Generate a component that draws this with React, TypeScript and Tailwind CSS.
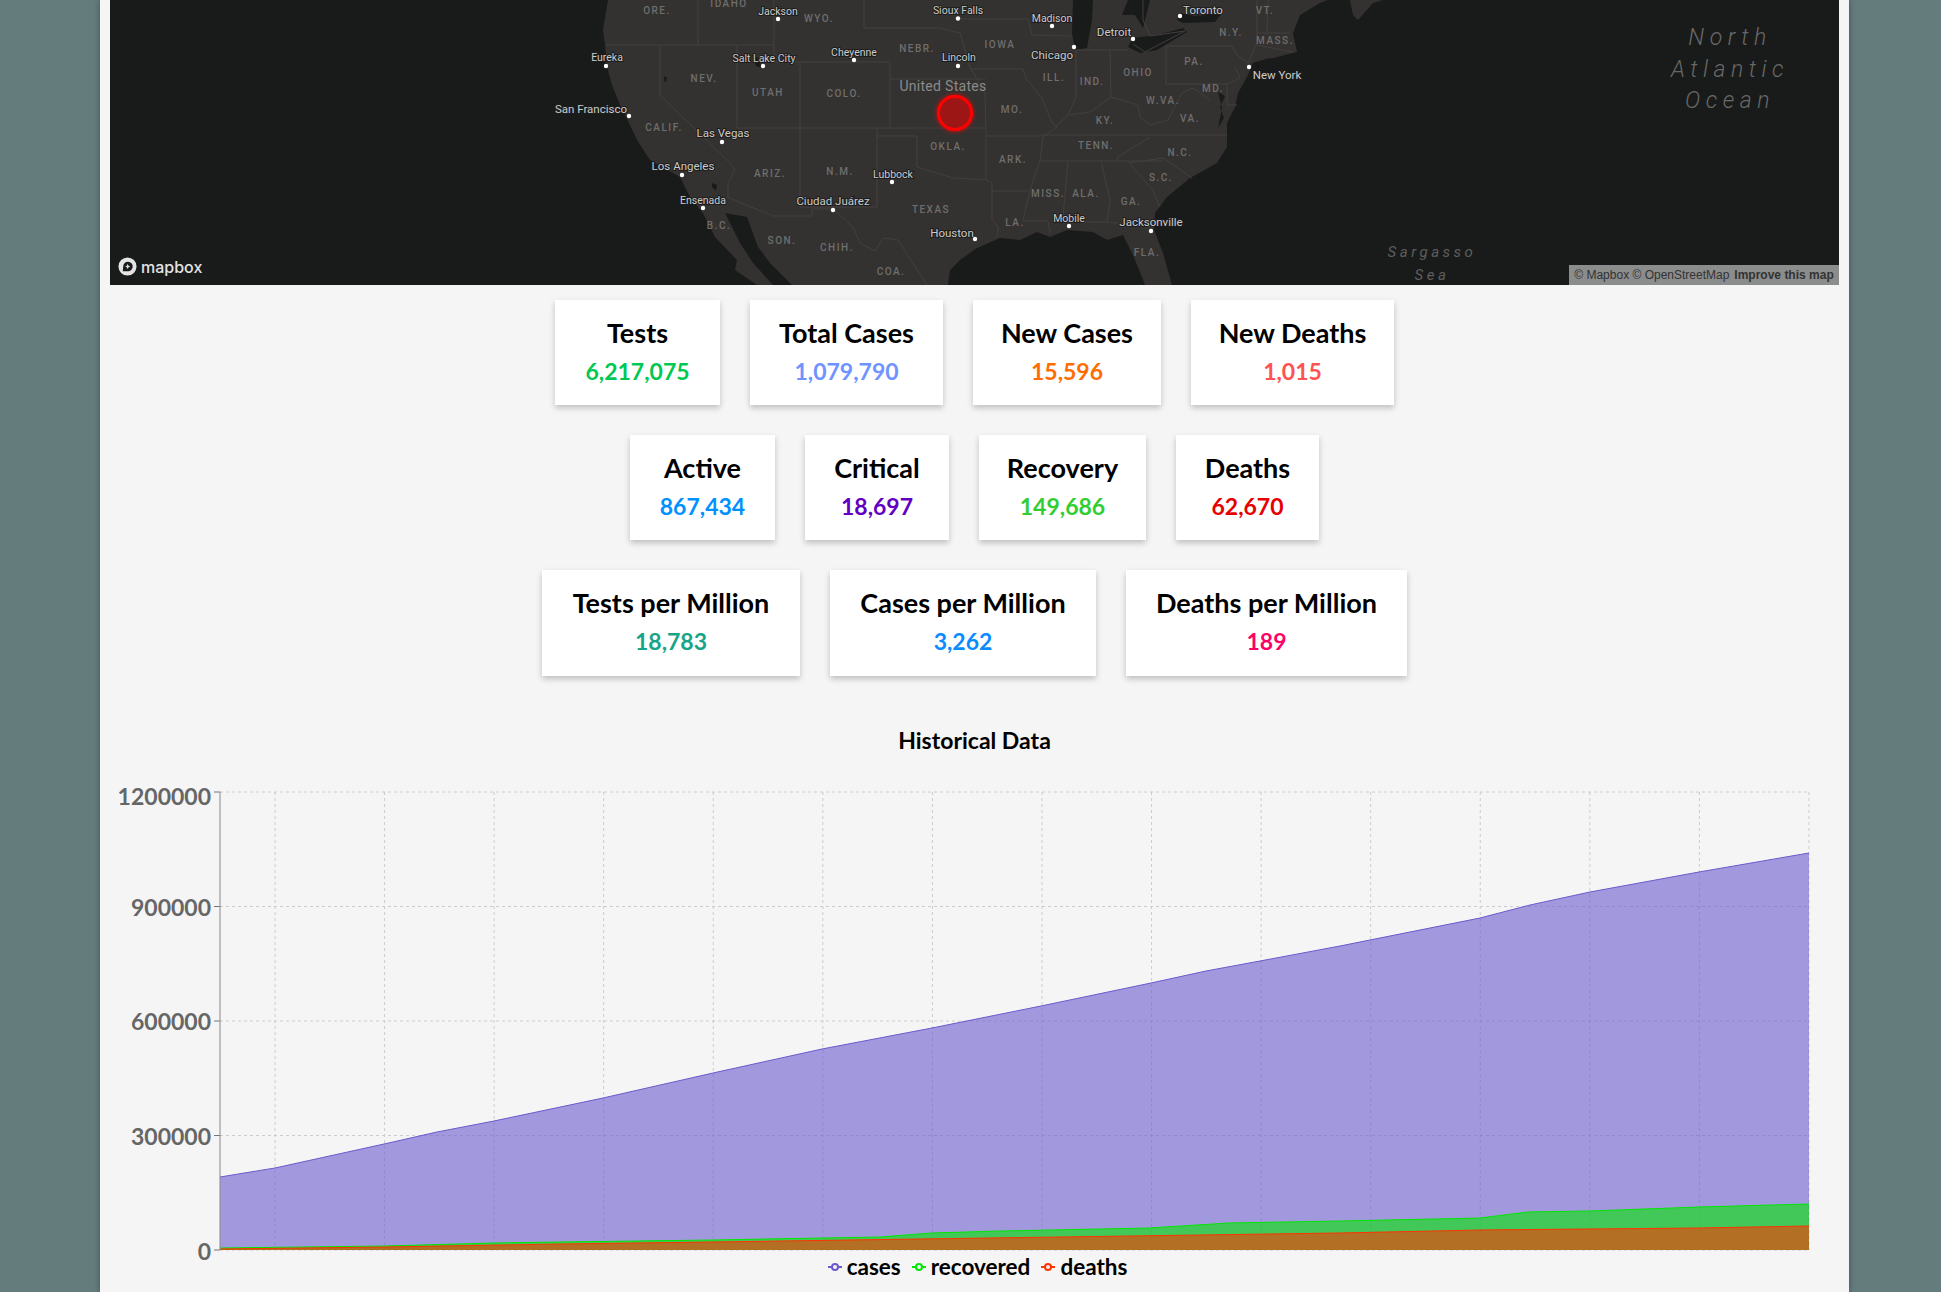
import React from 'react';

type Stat = { label: string; value: string; width: string; color: string };

const rowOne: Stat[] = [
  { label: 'Tests', value: '6,217,075', width: 'w-[165px]', color: 'text-[#00c853]' },
  { label: 'Total Cases', value: '1,079,790', width: 'w-[193px]', color: 'text-[#6f94ff]' },
  { label: 'New Cases', value: '15,596', width: 'w-[188px]', color: 'text-[#ff6d00]' },
  { label: 'New Deaths', value: '1,015', width: 'w-[203px]', color: 'text-[#ff5252]' },
];
const rowTwo: Stat[] = [
  { label: 'Active', value: '867,434', width: 'w-[145px]', color: 'text-[#0091ff]' },
  { label: 'Critical', value: '18,697', width: 'w-[144px]', color: 'text-[#6200c4]' },
  { label: 'Recovery', value: '149,686', width: 'w-[167px]', color: 'text-[#32cd32]' },
  { label: 'Deaths', value: '62,670', width: 'w-[143px]', color: 'text-[#e60000]' },
];
const rowThree: Stat[] = [
  { label: 'Tests per Million', value: '18,783', width: 'w-[258px]', color: 'text-[#17a589]' },
  { label: 'Cases per Million', value: '3,262', width: 'w-[266px]', color: 'text-[#0a8cff]' },
  { label: 'Deaths per Million', value: '189', width: 'w-[281px]', color: 'text-[#ff0066]' },
];

const cities: [string, number, number, number, number, boolean][] = [
  ['Jackson', 778, 15, 778, 19, true],
  ['Sioux Falls', 958, 14, 958, 18.5, true],
  ['Eureka', 607, 61, 606, 66, true],
  ['Salt Lake City', 764, 62, 763, 66, true],
  ['Cheyenne', 854, 56, 854, 60, true],
  ['Lincoln', 959, 61, 958, 66, true],
  ['San Francisco', 591, 113, 629, 116, false],
  ['Las Vegas', 723, 137, 722, 142, false],
  ['Los Angeles', 683, 170, 682, 175, false],
  ['Ensenada', 703, 204, 703, 208, true],
  ['Ciudad Juárez', 833, 205, 833, 210, false],
  ['Lubbock', 893, 178, 892, 182, true],
  ['Houston', 952, 237, 975, 239, false],
  ['Madison', 1052, 22, 1052, 26, true],
  ['Toronto', 1203, 14, 1180, 16, false],
  ['Detroit', 1114, 36, 1133, 39, false],
  ['Chicago', 1052, 59, 1074, 47, false],
  ['New York', 1277, 79, 1249, 67, false],
  ['Mobile', 1069, 222, 1069, 226, true],
  ['Jacksonville', 1151, 226, 1151, 231, false],
];

const states: [string, number, number][] = [
  ['ORE.', 657, 14], ['IDAHO', 729, 7], ['WYO.', 819, 22], ['NEBR.', 917, 52], ['IOWA', 1000, 48],
  ['NEV.', 704, 82], ['UTAH', 768, 96], ['COLO.', 844, 97], ['CALIF.', 664, 131], ['MO.', 1012, 113],
  ['OKLA.', 948, 150], ['ARIZ.', 770, 177], ['N.M.', 840, 175], ['TEXAS', 931, 213], ['ARK.', 1013, 163],
  ['LA.', 1015, 226], ['SON.', 782, 244], ['CHIH.', 837, 251], ['COA.', 891, 275], ['B.C.', 719, 229],
  ['N.Y.', 1231, 36], ['VT.', 1265, 14], ['MASS.', 1275, 44], ['PA.', 1194, 65], ['OHIO', 1138, 76],
  ['ILL.', 1054, 81], ['IND.', 1092, 85], ['MD.', 1213, 92], ['W.VA.', 1163, 104], ['VA.', 1190, 122],
  ['KY.', 1105, 124], ['TENN.', 1096, 149], ['N.C.', 1180, 156], ['S.C.', 1161, 181], ['MISS.', 1048, 197],
  ['ALA.', 1086, 197], ['GA.', 1131, 205], ['FLA.', 1147, 256],
];

const land =
  '608,0 603,30 605,45 607,67 612,85 620,105 630,125 637,140 650,160 680,177 690,197 703,213 715,237 737,260 735,270 757,285 948,285 950,270 960,260 977,248 1000,238 1020,240 1037,232 1050,237 1067,230 1093,232 1107,240 1123,235 1132,253 1138,267 1145,285 1172,285 1163,253 1154,230 1155,213 1167,197 1190,178 1217,163 1227,147 1227,123 1235,107 1238,93 1248,75 1253,63 1297,52 1293,33 1300,15 1320,3 1328,0';

const waters = [
  '725,213 747,217 758,247 770,263 792,285 773,285 753,263 740,243',
  '1073,0 1072,33 1075,50 1087,48 1092,20 1093,0',
  '1128,0 1122,15 1135,15 1143,28 1150,0',
  '1128,47 1140,53 1157,50 1187,32 1183,28 1157,35 1133,38',
  '1177,20 1180,13 1195,16 1222,13 1215,22 1183,23',
  '1253,63 1290,52 1270,58 1256,67',
  '1218,92 1225,96 1220,107 1224,118 1218,128 1222,108',
  '752,55 758,58 762,68 756,66',
  '664,76 667,78 666,82 664,81',
  '712,183 717,185 716,191 712,187',
];

const borders = [
  '606,45 774,45', '660,45 660,95 730,163 735,170 728,183 728,197', '698,0 698,45', '774,0 774,62 800,62',
  '737,45 737,128 986,128', '800,62 800,207', '864,0 864,28 940,28 960,33 970,67 985,93 986,136 986,180',
  '800,62 890,62 890,128', '890,79 985,79', '877,128 877,207 800,207',
  '877,136 917,136 917,167 953,178 987,180 992,183 992,220 998,227 997,237', '986,136 1040,136', '992,191 1028,191',
  '727,197 773,216 812,216 812,209 833,209 853,227 860,243 875,251 883,238 898,240 913,263 927,285',
  '960,19 1028,19 1032,35 1072,36', '970,69 1023,69 1027,80 1042,98 1052,123 1057,127 1043,137 1040,161 1030,190 1023,220',
  '1076,50 1076,97 1068,115 1055,127', '1075,50 1128,50', '1110,50 1111,97',
  '1068,115 1090,112 1111,97 1138,105 1140,117 1150,125 1168,120 1182,93 1193,88 1210,100',
  '1166,46 1166,84 1228,84', '1166,46 1232,46 1237,55 1248,63', '1235,67 1240,78 1228,84', '1227,84 1227,105 1237,105',
  '1040,135 1227,135', '1040,161 1163,161', '1150,137 1118,157 1117,161', '1129,163 1163,158 1192,178',
  '1129,163 1153,190 1160,207', '1068,161 1063,217', '1101,161 1110,200 1107,222', '1023,221 1048,221 1050,233',
  '1068,222 1108,222 1150,227', '1257,0 1257,43 1248,63', '1268,0 1267,32', '1257,33 1290,33', '1257,45 1293,52',
  '1133,44 1145,52 1185,31 1150,36 1143,20 1143,0',
];

const casesLine: [number, number][] = [
  [220, 1177], [275, 1168], [384, 1144], [437, 1132], [494, 1121], [603, 1098], [713, 1073], [822, 1049],
  [932, 1028], [1041, 1006], [1151, 983], [1206, 971], [1260, 961], [1340, 946], [1370, 940], [1480, 918],
  [1530, 905], [1590, 892], [1699, 872], [1809, 853],
];
const recoveredLine: [number, number][] = [
  [220, 1248], [384, 1246], [494, 1243], [560, 1242], [713, 1240], [822, 1238], [880, 1237], [932, 1233],
  [1000, 1231], [1149, 1228], [1229, 1223], [1340, 1221], [1480, 1218], [1528, 1212], [1590, 1211], [1699, 1207],
  [1809, 1204],
];
const deathsLine: [number, number][] = [
  [220, 1249], [384, 1247], [560, 1244], [713, 1242], [1060, 1237], [1340, 1233], [1480, 1230], [1699, 1228],
  [1809, 1226],
];

const yTicks: [string, number, number][] = [
  ['1200000', 792, 805],
  ['900000', 906.5, 915.5],
  ['600000', 1021, 1030],
  ['300000', 1135.5, 1144.5],
  ['0', 1250, 1259.5],
];
const xGrid = Array.from({ length: 15 }, (_, i) => 275 + i * 109.57);

const toPoints = (line: [number, number][]) => line.map(([x, y]) => `${x},${y}`).join(' ');
const toArea = (line: [number, number][]) => `220,1250 ${toPoints(line)} 1809,1250`;

function MapPanel() {
  return (
    <div className="relative h-[285px] overflow-hidden bg-[#191b1a]">
      <svg viewBox="110 0 1729 285" className="block h-[285px] w-[1729px]">
        <polygon points={land} className="fill-[#343231]" />
        <polygon points="1350,0 1353,15 1358,20 1373,3 1383,0" className="fill-[#343231]" />
        {waters.map((p) => (
          <polygon key={p} points={p} className="fill-[#191b1a]" />
        ))}
        {borders.map((p) => (
          <polyline key={p} points={p} className="fill-none stroke-[#423f3e] stroke-[1px]" />
        ))}
        {states.map(([name, x, y]) => (
          <text
            key={name}
            x={x}
            y={y}
            textAnchor="middle"
            className="fill-[#6f6e6d] font-['Roboto',sans-serif] text-[10px] font-medium tracking-[1.5px]"
          >
            {name}
          </text>
        ))}
        <text x={943} y={91} textAnchor="middle" className="fill-[#8b8a89] font-['Roboto',sans-serif] text-[14px] tracking-[0.3px]">
          United States
        </text>
        {cities.map(([name, tx, ty, dx, dy, small]) => (
          <g key={name}>
            <text
              x={tx}
              y={ty}
              textAnchor="middle"
              className={`fill-[#cbcbcb] stroke-[#1d1d1d] stroke-[2px] font-['Roboto',sans-serif] [paint-order:stroke] ${small ? 'text-[10.5px]' : 'text-[11.5px]'}`}
            >
              {name}
            </text>
            <circle cx={dx} cy={dy} r={2.2} className="fill-white" />
          </g>
        ))}
        <circle cx={955} cy={113} r={16.5} className="fill-[#9c1616] stroke-[#ff0000] stroke-[3px] drop-shadow-[0_0_2px_#ff0000]" />
        {[['North', 45], ['Atlantic', 77], ['Ocean', 108]].map(([t, y]) => (
          <text
            key={t}
            x={1730}
            y={y}
            textAnchor="middle"
            className="fill-[#686868] font-['Roboto',sans-serif] text-[23px] font-light italic tracking-[5.5px]"
          >
            {t}
          </text>
        ))}
        {[['Sargasso', 257], ['Sea', 280]].map(([t, y]) => (
          <text
            key={t}
            x={1432}
            y={y}
            textAnchor="middle"
            className="fill-[#5e5e5e] font-['Roboto',sans-serif] text-[15px] italic tracking-[3.5px]"
          >
            {t}
          </text>
        ))}
      </svg>
      <div className="absolute bottom-[9px] left-[8px] flex items-center gap-[4px]">
        <svg viewBox="0 0 20 20" className="h-[19px] w-[19px]">
          <circle cx="10" cy="10" r="9.5" fill="#e4e4e4" />
          <path d="M5 15 L5.5 10 A5 5 0 1 1 10 15 Z" fill="#191b1a" />
          <path d="M10.2 7 L11 9.2 L13 10 L11 10.8 L10.2 13 L9.4 10.8 L7.4 10 L9.4 9.2 Z" fill="#e4e4e4" />
        </svg>
        <span className="font-['Inter',sans-serif] text-[16px] leading-none font-medium text-[#e4e4e4]">mapbox</span>
      </div>
      <div className="absolute right-0 bottom-0 flex h-[20px] w-[270px] items-center justify-center gap-[5px] bg-[#8b8c8c] font-['Liberation_Sans',sans-serif] text-[12px] text-[#333]">
        <span>© Mapbox © OpenStreetMap</span>
        <span className="font-bold">Improve this map</span>
      </div>
    </div>
  );
}

function StatRow({ stats, tall }: { stats: Stat[]; tall?: boolean }) {
  return (
    <div className="flex justify-center gap-[30px]">
      {stats.map((s) => (
        <div
          key={s.label}
          className={`${s.width} ${tall ? 'h-[106px]' : 'h-[105px]'} flex flex-col items-center bg-white pt-[16px] shadow-[0_3px_6px_rgba(0,0,0,0.22)]`}
        >
          <div className="text-[27px] leading-[34px] font-bold whitespace-nowrap text-black">{s.label}</div>
          <div className={`${s.color} mt-[6px] text-[23px] leading-[30px] font-bold`}>{s.value}</div>
        </div>
      ))}
    </div>
  );
}

function HistoryChart() {
  return (
    <svg viewBox="110 770 1729 500" className="block h-[500px] w-[1729px]">
      {yTicks.map(([label, y]) => (
        <line key={label} x1={220} x2={1809} y1={y} y2={y} strokeDasharray="3 3" className="stroke-[#ccc]" />
      ))}
      {xGrid.map((x) => (
        <line key={x} x1={x} x2={x} y1={792} y2={1250} strokeDasharray="3 3" className="stroke-[#ccc]" />
      ))}
      <polygon points={toArea(casesLine)} className="fill-[#6a5acd] opacity-60" />
      <polyline points={toPoints(casesLine)} className="fill-none stroke-[#6a5acd]" />
      <polygon points={toArea(recoveredLine)} className="fill-[#00e800] opacity-60" />
      <polyline points={toPoints(recoveredLine)} className="fill-none stroke-[#00e800]" />
      <polygon points={toArea(deathsLine)} className="fill-[#ff3300] opacity-60" />
      <polyline points={toPoints(deathsLine)} className="fill-none stroke-[#ff3300]" />
      <line x1={220} x2={220} y1={792} y2={1250} className="stroke-[#888]" />
      {yTicks.map(([label, y, base]) => (
        <g key={label}>
          <line x1={214} x2={220} y1={y} y2={y} className="stroke-[#777]" />
          <text x={211} y={base} textAnchor="end" className="fill-[#666] font-['Lato',sans-serif] text-[23px] font-bold">
            {label}
          </text>
        </g>
      ))}
    </svg>
  );
}

function LegendItem({ label, stroke }: { label: string; stroke: string }) {
  return (
    <div className="flex items-center gap-[5px]">
      <svg viewBox="0 0 14 10" className="h-[10px] w-[14px]">
        <line x1="0" x2="14" y1="5" y2="5" stroke={stroke} strokeWidth="2" />
        <circle cx="7" cy="5" r="3" fill="#f5f5f5" stroke={stroke} strokeWidth="2" />
      </svg>
      <span className="text-[22.5px] leading-[28px] font-bold text-black">{label}</span>
    </div>
  );
}

export default function App() {
  return (
    <div className="h-[1292px] overflow-hidden bg-[#647c7c] font-['Lato',sans-serif]">
      <div className="ml-[100px] h-[1292px] w-[1749px] bg-[#f5f5f5] px-[10px] shadow-[0_0_6px_rgba(0,0,0,0.35)]">
        <MapPanel />
        <div className="flex flex-col gap-[30px] pt-[15px]">
          <StatRow stats={rowOne} />
          <StatRow stats={rowTwo} />
          <StatRow stats={rowThree} tall />
        </div>
        <h2 className="mt-[50px] text-center text-[23px] leading-[28px] font-bold text-black">Historical Data</h2>
        <div className="mt-[16px]">
          <HistoryChart />
        </div>
        <div className="-mt-[17px] flex justify-center gap-[11px] pl-[6px]">
          <LegendItem label="cases" stroke="#6a5acd" />
          <LegendItem label="recovered" stroke="#00e800" />
          <LegendItem label="deaths" stroke="#ff3300" />
        </div>
      </div>
    </div>
  );
}
